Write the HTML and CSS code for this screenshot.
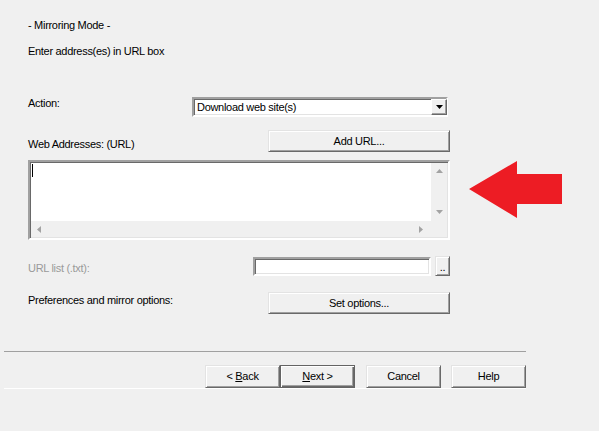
FILE: index.html
```html
<!DOCTYPE html>
<html>
<head>
<meta charset="utf-8">
<link rel="stylesheet" href="styles.css">
</head>
<body>
<div class="page">
  <div class="form">
    <div class="title">- Mirroring Mode -</div>
    <div class="hint">Enter address(es) in URL box</div>

    <div class="row row-action">
      <span class="label">Action:</span>
      <div class="select">
        <span class="select-text">Download web site(s)</span>
        <span class="select-btn"><svg width="7" height="4" viewBox="0 0 7 4"><path d="M0 0H7L3.5 4Z" fill="#000"/></svg></span>
      </div>
    </div>

    <div class="row row-web">
      <span class="label label-web">Web Addresses: (URL)</span>
      <button class="btn btn-wide"><span>Add URL...</span></button>
    </div>

    <div class="textarea">
      <div class="ta-main">
        <div class="ta-text"><span class="caret"></span></div>
        <div class="vscroll">
          <svg width="7" height="4" viewBox="0 0 7 4"><path d="M0 4H7L3.5 0Z" fill="#a3a3a3"/></svg>
          <svg width="7" height="4" viewBox="0 0 7 4"><path d="M0 0H7L3.5 4Z" fill="#a3a3a3"/></svg>
        </div>
      </div>
      <div class="ta-bottom">
        <div class="hscroll">
          <svg width="4" height="7" viewBox="0 0 4 7"><path d="M4 0V7L0 3.5Z" fill="#a3a3a3"/></svg>
          <svg width="4" height="7" viewBox="0 0 4 7"><path d="M0 0V7L4 3.5Z" fill="#a3a3a3"/></svg>
        </div>
        <div class="corner"></div>
      </div>
    </div>

    <div class="row row-list">
      <span class="label label-disabled">URL list (.txt):</span>
      <div class="file-pick">
        <div class="input"></div>
        <button class="btn btn-dots"><span>..</span></button>
      </div>
    </div>

    <div class="row row-pref">
      <span class="label label-pref">Preferences and mirror options:</span>
      <button class="btn btn-wide"><span>Set options...</span></button>
    </div>
  </div>

  <div class="footer">
    <div class="footer-buttons">
      <button class="btn btn-nav"><span>&lt; <u>B</u>ack</span></button>
      <button class="btn btn-nav btn-default"><span><u>N</u>ext &gt;</span></button>
      <button class="btn btn-nav btn-cancel"><span>Cancel</span></button>
      <button class="btn btn-nav btn-help"><span>Help</span></button>
    </div>
  </div>

  <svg class="arrow" width="94" height="58" viewBox="0 0 94 58">
    <polygon points="0,28 48,0 48,13 93,13 93,43 48,43 48,57" fill="#ed1c24"/>
  </svg>
</div>
</body>
</html>
```

FILE: styles.css
```css
* { box-sizing: border-box; }
html, body {
  margin: 0;
  padding: 0;
  background: #f0f0f0;
}
body {
  font-family: "Liberation Sans", Arial, sans-serif;
  font-size: 11px;
  line-height: 13px;
  letter-spacing: -0.3px;
  color: #000;
  width: 599px;
  height: 431px;
  overflow: hidden;
}
.page {
  position: relative;
  padding-top: 19px;
}
.form {
  margin-left: 28px;
  width: 421px;
}
.title { height: 13px; }
.hint { margin-top: 13px; height: 13px; }

.row {
  display: flex;
  justify-content: space-between;
  align-items: flex-start;
}
.row-action { margin-top: 39px; }
.row-web { margin-top: 13px; }
.row-list { margin-top: 16px; }
.row-pref { margin-top: 16px; }

.label { display: block; }
.label-web { padding-top: 8px; }
.label-disabled { color: #9a9a9a; padding-top: 6px; }
.label-pref { padding-top: 2px; }

.select {
  width: 256px;
  height: 20px;
  margin-right: 1px;
  background: #fff;
  border: 2px solid;
  border-color: #a0a0a0 #fff #fff #a0a0a0;
  box-shadow: inset 1px 1px 0 #696969, inset -1px -1px 0 #e3e3e3;
  display: flex;
  align-items: center;
  justify-content: space-between;
  padding-left: 3px;
}
.select-text { padding-top: 1px; }
.select-btn {
  width: 16px;
  height: 16px;
  margin-right: -1px;
  background: #f0f0f0;
  border: 1px solid;
  border-color: #fff #696969 #696969 #fff;
  box-shadow: inset -1px -1px 0 #a0a0a0;
  display: flex;
  align-items: center;
  justify-content: center;
}

.btn {
  font-family: inherit;
  font-size: 11px;
  line-height: 13px;
  letter-spacing: -0.3px;
  color: #000;
  background: #f0f0f0;
  border: 1px solid;
  border-color: #e3e3e3 #696969 #696969 #e3e3e3;
  box-shadow: inset 1px 1px 0 #fff, inset -1px -1px 0 #a0a0a0;
  padding: 0;
  margin: 0;
  display: flex;
  align-items: center;
  justify-content: center;
}
.btn-wide {
  width: 182px;
  height: 22px;
  margin-right: -1px;
}

.textarea {
  margin-top: 8px;
  width: 422px;
  height: 80px;
  margin-right: -1px;
  background: #fff;
  border: 2px solid;
  border-color: #a0a0a0 #fff #fff #a0a0a0;
  box-shadow: inset 1px 1px 0 #696969, inset -1px -1px 0 #e3e3e3;
  padding: 1px;
  display: flex;
  flex-direction: column;
}
.ta-main {
  flex: 1;
  display: flex;
}
.ta-text {
  flex: 1;
  padding: 1px 0 0 1px;
}
.caret {
  display: block;
  width: 1px;
  height: 13px;
  background: #000;
}
.vscroll {
  width: 16px;
  background: #f0f0f0;
  display: flex;
  flex-direction: column;
  justify-content: space-between;
  align-items: center;
  padding: 6px 0 7px;
}
.ta-bottom {
  height: 16px;
  display: flex;
}
.hscroll {
  flex: 1;
  background: #f0f0f0;
  display: flex;
  justify-content: space-between;
  align-items: center;
  padding: 0 8px 0 6px;
}
.corner {
  width: 16px;
  background: #f0f0f0;
}

.file-pick {
  display: flex;
  gap: 4px;
  margin-right: -1px;
}
.input {
  width: 178px;
  height: 19px;
  margin-top: 1px;
  background: #fff;
  border: 2px solid;
  border-color: #a0a0a0 #fff #fff #a0a0a0;
  box-shadow: inset 1px 1px 0 #696969, inset -1px -1px 0 #e3e3e3;
}
.btn-dots {
  width: 15px;
  height: 20px;
  align-items: flex-end;
  padding-bottom: 4px;
  line-height: 8px;
}

.footer {
  margin-top: 37px;
  margin-left: 4px;
  width: 522px;
  border-top: 1px solid #a0a0a0;
  box-shadow: 0 1px 0 #fff;
}
.footer-buttons {
  display: flex;
  justify-content: flex-end;
  padding-top: 13px;
}
.btn-nav {
  width: 75px;
  height: 23px;
}
.btn-default {
  border: 1px solid #646464;
  box-shadow: inset 1px 1px 0 #fff, inset -1px -1px 0 #696969, inset -2px -2px 0 #a0a0a0;
}
.btn-cancel { margin-left: 11px; }
.btn-help { margin-left: 10px; }
u { text-decoration: underline; text-underline-offset: 1px; }

.arrow {
  position: absolute;
  left: 469px;
  top: 161px;
}
```
